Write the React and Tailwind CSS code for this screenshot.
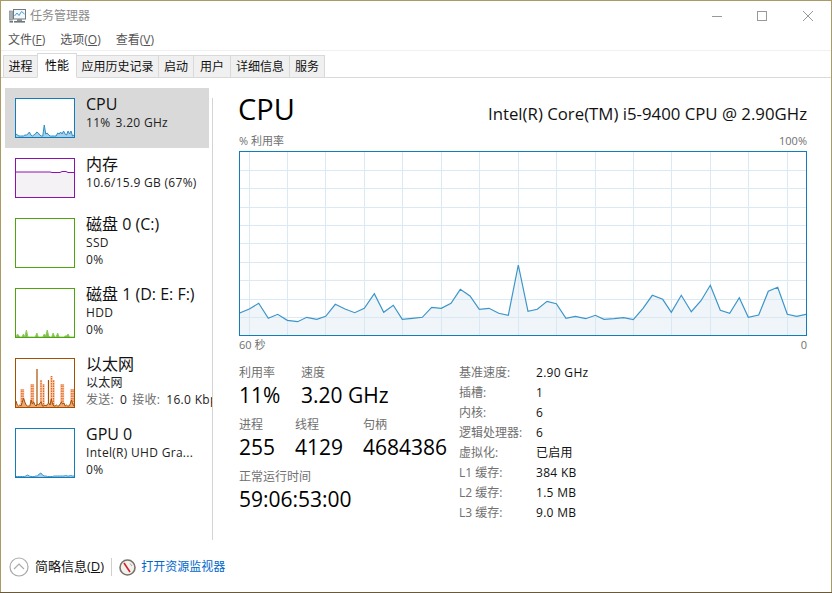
import React from 'react'

const font = { fontFamily: '"Open Sans", "Noto Sans CJK SC", sans-serif' }

// main chart trace, read off the screen in absolute px
const mainPoints = [
  [239, 313.3], [249.3, 309], [258.7, 303.3], [268.3, 318.3], [277.7, 314.3], [287.3, 320.3], [297.7, 321.7], [306.7, 317.3],
  [316.7, 319.3], [325.7, 316.3], [335.3, 304.3], [345, 309], [354.7, 312.7], [364.3, 308.3], [374.3, 293.7], [383.7, 312.3],
  [393.3, 305.3], [402.3, 319.3], [412.3, 318.3], [422.3, 317.3], [431.7, 307.3], [441.3, 308.3], [451, 303.3], [460.3, 289.3],
  [470, 296], [479.3, 309.3], [489, 308.3], [498.7, 313.3], [508.3, 315.3], [518.3, 265], [528, 311.3], [537.3, 309.3],
  [547, 301.3], [556.3, 303.7], [566, 318.3], [575.3, 316.3], [585.7, 318.7], [595.3, 315.3], [604, 319.3], [614, 318.7],
  [623.7, 317.7], [633.3, 319.7], [643, 308.3], [652.3, 295.3], [662.7, 299.3], [671.3, 312.3], [681.3, 295.3], [691.3, 311.7],
  [701, 300.7], [710.3, 285.3], [720.3, 310.3], [729.7, 313.3], [739.3, 297.7], [748.3, 317.3], [758.7, 315], [768.3, 291.3],
  [777.7, 287.3], [787.3, 314.3], [796.7, 316.3], [806, 314.3],
]
const gridX = [249, 287, 325, 364, 402, 441, 479, 518, 556, 595, 633, 671, 710, 748, 787]
const gridY = [170, 188, 207, 225, 243, 262, 280, 299, 317]

// svg sits inside the 1px border, so its origin is (240, 152) on screen
const MainChart = () => {
  const line = mainPoints.map(([x, y]) => `${x - 240},${y - 152}`).join(' ')
  return (
    <div className="h-[185px] w-[568px] border border-[#117dbb] bg-white">
      <svg width="566" height="183" className="block">
        {gridX.map(x => <line key={x} x1={x - 240 + 0.5} x2={x - 240 + 0.5} y1="0" y2="183" stroke="#d9eaf4" />)}
        {gridY.map(y => <line key={y} x1="0" x2="566" y1={y - 152 + 0.5} y2={y - 152 + 0.5} stroke="#d9eaf4" />)}
        <polygon points={`-1,183 ${line} 566,183`} fill="#d9e6f0" fillOpacity="0.4" />
        <polyline points={line} fill="none" stroke="#3c95c8" strokeWidth="1.2" />
      </svg>
    </div>
  )
}

const toPoints = (vals, w, h) => vals.map((v, i) => `${(i / (vals.length - 1)) * w},${h - v}`).join(' ')

const Trace = ({ vals, color, fill, w = 58, h = 38 }) => {
  const pts = toPoints(vals, w, h)
  return (
    <>
      <polygon points={`0,${h} ${pts} ${w},${h}`} fill={fill} />
      <polyline points={pts} fill="none" stroke={color} strokeWidth="1" />
    </>
  )
}

const cpuVals = [3, 2, 1, 1, 1, 1, 2, 2, 3, 5, 2, 1, 2, 3, 5, 4, 2, 1, 1, 12, 3, 4, 2, 1, 1, 1, 1, 1, 4, 3, 5, 3, 6, 3, 2, 6, 3, 6, 1, 2]
const gpuVals = [0.5, 0.5, 0.5, 0.5, 0.5, 0.5, 1, 2, 1, 0.5, 0.5, 0.5, 1, 1, 3, 4, 2, 1, 1, 0.5, 0.5, 0.5, 0.5, 1, 1, 1, 1, 1, 1, 1, 1.5, 1, 1, 1.5, 1, 1]
const diskVals = [0, 3, 1, 0, 0, 3, 0, 7, 0, 0, 0, 0, 0, 0, 4, 0, 0, 0, 0, 3, 1, 7, 1, 0, 0, 4, 0, 0, 4, 0, 0, 0, 0, 1, 1, 3, 0, 0, 0, 0]
const memVals = [25, 25, 25, 25, 25, 25, 25, 25, 25, 25, 25, 25, 25, 25, 25, 25, 25, 25, 24.5, 24.5, 24.5, 24.5, 24.5, 25.5, 25.5, 25.5, 24.5, 24.5, 24.5, 24.5]
// dotted spikes of the ethernet graph: [x, height, solid]
const netSpikes = [[5.5, 18], [7, 18], [15.5, 23], [17, 23], [21, 38, true], [25, 27], [27.5, 23], [32.5, 27, true], [35.5, 31], [37.5, 27], [45.5, 23], [47, 23], [55.5, 18], [57, 18]]
const netBase = [6, 2, 1, 2, 1, 5, 9, 5, 2, 1, 1, 1, 7, 3, 5, 2, 1, 3, 2, 4, 5, 1, 1, 2, 1, 3, 4, 2, 8, 3, 1, 1, 2, 1, 1, 3, 5, 3, 4, 1, 2, 1, 1, 3, 7, 3, 1]

const Mini = ({ border, h, children }) => (
  <div className={`w-[60px] shrink-0 border ${border} ${h} bg-white`}>
    <svg width="58" height={h === 'h-[40px]' ? 38 : 48} className="block">{children}</svg>
  </div>
)

const SideRow = ({ name, lines, chart, selected }) => (
  <div className={`flex w-[204px] gap-[11px] py-[10px] pl-[10px] whitespace-nowrap ${selected ? 'bg-[#d9d9d9]' : ''}`}>
    {chart}
    <div className="-mt-[4px] min-w-0">
      <div className="text-[16px] leading-[20px] text-[#111]">{name}</div>
      {lines.map((l, i) => <div key={i} className="text-[12px] leading-[17px] tracking-[0.3px] text-[#222]">{l}</div>)}
    </div>
  </div>
)

const Sidebar = () => (
  <div className="w-[207px] shrink-0 overflow-hidden">
    <SideRow
      selected
      name="CPU"
      lines={[<span key="c">11%<span className="ml-[5px]">3.20 GHz</span></span>]}
      chart={<Mini border="border-[#117dbb]" h="h-[40px]"><Trace vals={cpuVals} h={38} color="#2f8ec6" fill="#a9cfe6" /></Mini>}
    />
    <SideRow
      name="内存"
      lines={['10.6/15.9 GB (67%)']}
      chart={<Mini border="border-[#8b12ae]" h="h-[40px]"><Trace vals={memVals} h={38} color="#8b12ae" fill="#f4f2f4" /></Mini>}
    />
    <SideRow
      name="磁盘 0 (C:)"
      lines={['SSD', '0%']}
      chart={<Mini border="border-[#4da60c]" h="h-[50px]" />}
    />
    <SideRow
      name="磁盘 1 (D: E: F:)"
      lines={['HDD', '0%']}
      chart={<Mini border="border-[#4da60c]" h="h-[50px]"><Trace vals={diskVals} h={48} color="#8cc860" fill="#7dbb4e" /></Mini>}
    />
    <SideRow
      name="以太网"
      lines={[
        '以太网',
        <span key="n">
          <span className="text-[#707070]">发送:</span>
          <span className="ml-[6px]">0</span>
          <span className="ml-[5px] text-[#707070]">接收:</span>
          <span className="ml-[6px]">16.0 Kbps</span>
        </span>,
      ]}
      chart={
        <Mini border="border-[#a74f01]" h="h-[50px]">
          {netSpikes.map(([x, v, solid]) => (
            <g key={x}>
              {!solid && <line x1={x} x2={x} y1="48" y2={48 - v} stroke="#f4c9ad" strokeWidth="2.4" />}
              <line x1={x} x2={x} y1="48" y2={48 - v} stroke={solid ? '#a74f01' : '#e8631a'} strokeWidth="1.2" strokeDasharray={solid ? undefined : '1.5 1'} />
            </g>
          ))}
          <Trace vals={netBase} h={48} color="#a74f01" fill="#e9a877" />
        </Mini>
      }
    />
    <SideRow
      name="GPU 0"
      lines={['Intel(R) UHD Gra...', '0%']}
      chart={<Mini border="border-[#117dbb]" h="h-[50px]"><Trace vals={gpuVals} h={48} color="#3c95c8" fill="#a9cfe6" /></Mini>}
    />
  </div>
)

const Stat = ({ label, value, className = '' }) => (
  <div className={`whitespace-nowrap ${className}`}>
    <div className="text-[12px] leading-[17px] text-[#707070]">{label}</div>
    <div className="text-[21px] leading-[28px] text-black">{value}</div>
  </div>
)

const specs = [
  ['基准速度:', '2.90 GHz'],
  ['插槽:', '1'],
  ['内核:', '6'],
  ['逻辑处理器:', '6'],
  ['虚拟化:', '已启用'],
  ['L1 缓存:', '384 KB'],
  ['L2 缓存:', '1.5 MB'],
  ['L3 缓存:', '9.0 MB'],
]

const Main = () => (
  <div className="flex w-[568px] flex-col">
    <div className="flex h-[42px] items-center justify-between">
      <div className="-ml-[1px] text-[29px] leading-[40px] text-black">CPU</div>
      <div className="mt-[9px] text-[16.8px] leading-[24px] text-[#111]">Intel(R) Core(TM) i5-9400 CPU @ 2.90GHz</div>
    </div>
    <div className="flex h-[19px] items-end justify-between text-[11px] leading-[17px] text-[#707070]">
      <span>% 利用率</span>
      <span>100%</span>
    </div>
    <div className="mt-[2px]"><MainChart /></div>
    <div className="flex h-[19px] items-center justify-between text-[11px] text-[#707070]">
      <span>60 秒</span>
      <span>0</span>
    </div>
    <div className="mt-[9px] flex">
      <div className="w-[220px] shrink-0">
        <div className="flex">
          <Stat label="利用率" value="11%" className="w-[62px]" />
          <Stat label="速度" value="3.20 GHz" />
        </div>
        <div className="mt-[7px] flex">
          <Stat label="进程" value="255" className="w-[56px]" />
          <Stat label="线程" value="4129" className="w-[68px]" />
          <Stat label="句柄" value="4684386" />
        </div>
        <Stat label="正常运行时间" value="59:06:53:00" className="mt-[7px]" />
      </div>
      <div className="-mt-[1px] text-[12px] leading-[20px]">
        {specs.map(([k, v]) => (
          <div key={k} className="flex whitespace-nowrap">
            <span className="w-[77px] text-[#707070]">{k}</span>
            <span className="tracking-[0.3px] text-[#111]">{v}</span>
          </div>
        ))}
      </div>
    </div>
  </div>
)

const tabs = [
  ['进程', 'w-[34px] border-l'],
  ['性能', 'w-[40px] border-x', true],
  ['应用历史记录', 'w-[82px] border-r'],
  ['启动', 'w-[35px] border-r'],
  ['用户', 'w-[37px] border-r'],
  ['详细信息', 'w-[59px] border-r'],
  ['服务', 'w-[35px] border-r'],
]

const AppIcon = () => (
  <svg width="17" height="16" viewBox="0 0 17 16" className="shrink-0">
    <rect x="0.5" y="3" width="3" height="9" fill="#a8b0b4" stroke="#7a8286" strokeWidth="0.6" />
    <rect x="4.5" y="1.5" width="12" height="9.5" fill="#f4f8fa" stroke="#6f7a80" />
    <polyline points="5.5,8 8,5 10,7.5 12.5,3.5 15.5,6" fill="none" stroke="#4a9fd0" strokeWidth="1" />
    <rect x="8" y="11" width="5" height="2" fill="#8a9296" />
    <rect x="5" y="13" width="11" height="1.6" fill="#6f777b" />
    <rect x="0.5" y="12.8" width="3.5" height="1.8" fill="#6f777b" />
  </svg>
)

const GaugeIcon = () => (
  <svg width="17" height="17" viewBox="0 0 17 17" className="shrink-0">
    <circle cx="8.5" cy="8.5" r="7.5" fill="#f3f1ec" stroke="#77726c" strokeWidth="1.6" />
    <line x1="5" y1="4" x2="11" y2="13" stroke="#d2232a" strokeWidth="1.6" />
    <line x1="11" y1="4.5" x2="13" y2="7" stroke="#a8a49c" strokeWidth="1" />
  </svg>
)

export default function App() {
  return (
    <div className="h-[593px] w-[832px] overflow-hidden bg-[#6b5a3a]" style={font}>
      <div className="flex h-[592px] w-[832px] flex-col border border-b-0 border-[#a99a66] bg-white">
        {/* title bar */}
        <div className="flex h-[29px] shrink-0 items-center pl-[8px]">
          <AppIcon />
          <span className="ml-[4px] text-[12px] text-[#8c8c8c]">任务管理器</span>
          <svg width="135" height="14" viewBox="0 0 135 14" className="ml-auto text-[#999]">
            <line x1="16" x2="26" y1="7.5" y2="7.5" stroke="currentColor" />
            <rect x="61.5" y="2.5" width="9" height="9" fill="none" stroke="currentColor" />
            <path d="M107 2l10 10M117 2l-10 10" fill="none" stroke="currentColor" />
          </svg>
        </div>
        {/* menu */}
        <div className="flex h-[20px] shrink-0 items-center gap-[15px] pl-[7px] text-[12px] text-[#555]">
          <span>文件(<u>F</u>)</span>
          <span>选项(<u>O</u>)</span>
          <span>查看(<u>V</u>)</span>
        </div>
        {/* tabs */}
        <div className="flex h-[28px] shrink-0 items-end border-t border-b border-t-[#f0f0f0] border-b-[#d9d9d9] pl-[2px]">
          {tabs.map(([label, w, active]) => (
            <div
              key={label}
              className={`-mb-[1px] flex items-center justify-center border-t border-b border-[#d9d9d9] text-[12px] ${w} ${active ? 'h-[25px] border-b-white bg-white text-black' : 'h-[23px] bg-[#f0f0f0] text-[#111]'}`}
            >
              {label}
            </div>
          ))}
        </div>
        {/* body */}
        <div className="flex min-h-0 flex-1 pt-[10px]">
          <div className="ml-[4px]"><Sidebar /></div>
          <div className="mt-[10px] mb-[4px] w-px bg-[#d4d4d4]" />
          <div className="ml-[26px]"><Main /></div>
        </div>
        {/* footer */}
        <div className="flex h-[48px] shrink-0 items-center pb-[2px] pl-[8px] text-[13px]">
          <svg width="20" height="20" viewBox="0 0 20 20" className="shrink-0 text-[#aaa]">
            <circle cx="10" cy="10" r="9" fill="none" stroke="currentColor" strokeWidth="1.2" />
            <path d="M5 12l5-5 5 5" fill="none" stroke="currentColor" strokeWidth="1.2" />
          </svg>
          <span className="ml-[6px] text-[#111]">简略信息(<u>D</u>)</span>
          <div className="ml-[7px] h-[18px] w-px bg-[#cfcfcf]" />
          <div className="ml-[7px]"><GaugeIcon /></div>
          <span className="ml-[5px] text-[12px] text-[#0066cc]">打开资源监视器</span>
        </div>
      </div>
    </div>
  )
}
